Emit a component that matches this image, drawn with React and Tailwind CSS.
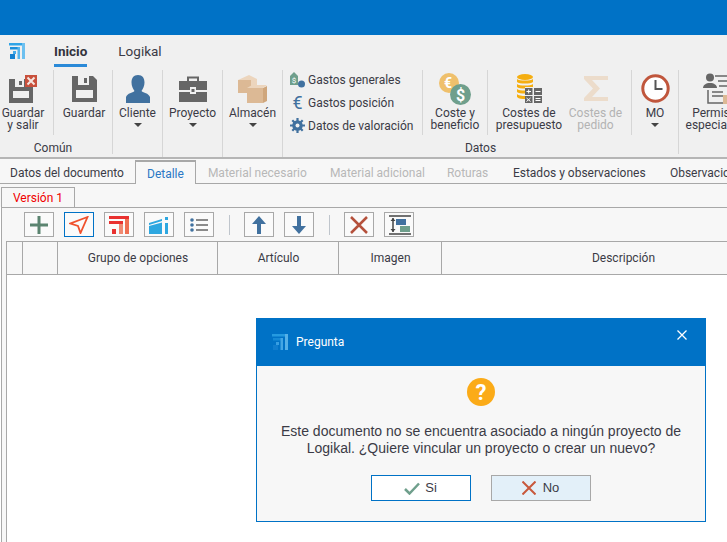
function Logo({ className }) {
  return (
    <svg className={className} viewBox="0 0 16 16">
      <rect x="0" y="0" width="16" height="2.500" fill="#2fa4e7" />
      <rect x="13" y="0" width="3" height="16" fill="#6cc0f0" />
      <rect x="1" y="4" width="10" height="2.500" fill="#1b8fdb" />
      <rect x="8.500" y="4" width="2.500" height="12" fill="#55b4ec" />
      <rect x="1" y="11" width="5" height="5" fill="#1580d0" />
      <rect x="4" y="8" width="3" height="3" fill="#45aaea" />
    </svg>
  );
}

function Floppy() {
  return (
    <svg width="25" height="26" viewBox="0 0 25 26">
      <path d="M0 0h21l4 4v22H0z" fill="#666" />
      <rect x="6" y="0" width="11" height="9" fill="#f0f0f0" />
      <rect x="12" y="2" width="3" height="5" fill="#666" />
      <rect x="4" y="14" width="17" height="8" fill="#f0f0f0" />
    </svg>
  );
}

function FloppyX() {
  return (
    <svg width="28" height="28" viewBox="0 0 28 28">
      <path d="M0 4h24v24H0z" fill="#666" />
      <rect x="6" y="4" width="9" height="8" fill="#f0f0f0" />
      <rect x="10" y="6" width="3" height="4" fill="#666" />
      <rect x="4" y="16" width="16" height="7" fill="#f0f0f0" />
      <rect x="16" y="0" width="12" height="12" fill="#c8503c" />
      <path d="M18.500 2.500l7 7M25.500 2.500l-7 7" stroke="#f5e6e0" strokeWidth="2" />
    </svg>
  );
}

function Person() {
  return (
    <svg width="24" height="28" viewBox="0 0 24 28">
      <path d="M12 0c4.500 0 6.500 3 6.500 7.500 0 3.500-1.500 6.500-3 8.500 2 2 7 2 8.500 6v6H0v-6c1.500-4 6.500-4 8.500-6-1.500-2-3-5-3-8.500C5.500 3 7.500 0 12 0z" fill="#41719f" />
    </svg>
  );
}

function Briefcase() {
  return (
    <svg width="28" height="26" viewBox="0 0 28 26">
      <path d="M9 6V1.500h10V6" fill="none" stroke="#666" strokeWidth="2" />
      <path d="M0 5h28v9H0zM0 16h28v10H0z" fill="#666" />
      <rect x="11" y="11" width="6" height="7" fill="#f0f0f0" />
      <rect x="12.500" y="13" width="3" height="3" fill="#666" />
    </svg>
  );
}

function Boxes() {
  return (
    <svg width="29" height="28" viewBox="0 0 29 28">
      <path d="M0 5l11-5 8 4v9l-8 4-11-4z" fill="#ecd5bd" />
      <path d="M0 5h13v13H0z" fill="#dcb995" />
      <path d="M9 13h16v15H9z" fill="#dcb995" />
      <path d="M25 13l4-2v15l-4 2z" fill="#cfa67c" />
      <path d="M9 13l5-3h15l-4 3z" fill="#ecd5bd" />
    </svg>
  );
}

function Coins() {
  return (
    <svg width="32" height="32" viewBox="0 0 32 32">
      <circle cx="10" cy="10" r="10" fill="#efc06c" />
      <text x="9" y="15" textAnchor="middle" fill="#fff" fontSize="14" fontWeight="700" fontFamily="Roboto, sans-serif">€</text>
      <circle cx="21.500" cy="21.500" r="10.500" fill="#6f9f8c" />
      <text x="21.500" y="27.500" textAnchor="middle" fill="#fff" fontSize="16" fontWeight="700" fontFamily="Roboto, sans-serif">$</text>
    </svg>
  );
}

function Database() {
  return (
    <svg width="25" height="29" viewBox="0 0 25 29">
      <ellipse cx="8" cy="3" rx="8" ry="3" fill="#f5ae10" />
      <path d="M0 5c2 2 14 2 16 0v3c-2 2-14 2-16 0zM0 10c2 2 14 2 16 0v3c-2 2-14 2-16 0zM0 15c2 2 14 2 16 0v3c-2 2-14 2-16 0zM0 20c2 2 8 2 8 2v3c-3 0-6 0-8-2z" fill="#f5ae10" />
      <rect x="8" y="13" width="17" height="16" fill="#f0f0f0" />
      <rect x="8" y="14" width="7.500" height="7" fill="#666" />
      <rect x="17" y="14" width="8" height="7" fill="#666" />
      <rect x="8" y="22" width="7.500" height="7" fill="#666" />
      <rect x="17" y="22" width="8" height="7" fill="#666" />
      <path d="M9.500 17.500h4.500M11.700 15.500v4M18.500 17.500h5M9.500 24l4 3.500M13.500 24l-4 3.500M18.500 24.500h5M18.500 26.500h5" stroke="#fff" strokeWidth="1" />
    </svg>
  );
}

function Sigma() {
  return (
    <svg width="24" height="25" viewBox="0 0 24 25">
      <path d="M0 0h24v4H8l8 8.500L8 21h16v4H0v-3l9-9.500L0 3z" fill="#ecdccb" />
    </svg>
  );
}

function Clock() {
  return (
    <svg width="29" height="29" viewBox="0 0 29 29">
      <circle cx="14.500" cy="14.500" r="12.700" fill="#fff" stroke="#c0563c" strokeWidth="3" />
      <path d="M14.500 6v9h7" fill="none" stroke="#555" strokeWidth="2" />
    </svg>
  );
}

function Permit() {
  return (
    <svg width="30" height="31" viewBox="0 0 30 31">
      <circle cx="7" cy="4.500" r="4" fill="#666" />
      <path d="M0 15c0-3 3-5 7-5s7 2 7 5z" fill="#666" />
      <path d="M5 17v13h18M12 3h16M15 8h13M16 13h12M9 19h11M9 23h11" fill="none" stroke="#666" strokeWidth="1.500" />
      <rect x="20" y="22" width="10" height="9" fill="#dcb995" />
    </svg>
  );
}

function Arrow() {
  return <div className="mt-[4px] h-0 w-0 border-x-[4px] border-t-[4px] border-x-transparent border-t-[#444]" />;
}

function IconBox({ children }) {
  return <div className="flex h-[37px] items-center justify-center">{children}</div>;
}

function Label({ lines, muted }) {
  return (
    <div className={`whitespace-nowrap text-center leading-[12px] ${muted ? "text-[#b3b3b3]" : ""}`}>
      {lines.map((l) => <div key={l}>{l}</div>)}
    </div>
  );
}

function BigGroup({ icon, lines, width }) {
  return (
    <div className={`${width} flex h-full shrink-0 flex-col items-center border-r border-[#d6d6d6]`}>
      <IconBox>{icon}</IconBox>
      <Label lines={lines} />
      <Arrow />
    </div>
  );
}

function ListRow({ icon, label }) {
  return (
    <div className="flex h-[23px] shrink-0 items-center gap-[3px]">
      <div className="flex w-[15px] justify-center">{icon}</div>
      <span className="whitespace-nowrap">{label}</span>
    </div>
  );
}

function ToolBtn({ children, active }) {
  return (
    <div className={`flex h-[25px] w-[30px] shrink-0 items-center justify-center border bg-[#fafafa] ${active ? "border-[#0072c6]" : "border-[#a8a8a8]"}`}>
      {children}
    </div>
  );
}

function Tab({ label, muted, width }) {
  return (
    <div className={`${width} flex h-[24px] shrink-0 items-center whitespace-nowrap pt-[3px] ${muted ? "text-[#b8b8b8]" : ""}`}>
      {label}
    </div>
  );
}

function Th({ width, label }) {
  return (
    <div className={`${width} flex shrink-0 items-center justify-center border-r border-[#a8a8a8] pl-px`}>{label}</div>
  );
}

export default function App() {
  return (
    <div className="relative flex h-[542px] w-[727px] flex-col overflow-hidden bg-white text-[12px] text-[#3b3b46] [font-family:Roboto,sans-serif]">
      <div className="h-[35px] shrink-0 bg-[#0072c6]" />

      {/* menu */}
      <div className="flex h-[32px] shrink-0 items-start bg-[#f0f0f0] pl-[9px] pt-[8px]">
        <Logo className="h-[16px] w-[16px]" />
        <div className="ml-[29px] h-[24px] border-b-[3px] border-[#2b8ad8] text-[13.500px] font-bold leading-[17px] text-[#33333d]">Inicio</div>
        <div className="ml-[31px] text-[13.500px] leading-[17px]">Logikal</div>
      </div>

      {/* ribbon */}
      <div className="flex h-[92px] shrink-0 overflow-hidden border-b-2 border-[#b5b5b5] bg-[#f0f0f0] pt-[3px]">
        <div className="h-[84px] w-[113px] shrink-0 border-r border-[#d6d6d6]">
          <div className="flex h-[65px]">
            <div className="flex w-[54px] shrink-0 flex-col items-center border-r border-[#d6d6d6] pr-[7px]">
              <IconBox><FloppyX /></IconBox>
              <Label lines={["Guardar", "y salir"]} />
            </div>
            <div className="flex w-[58px] shrink-0 flex-col items-center pl-[2px]">
              <IconBox><Floppy /></IconBox>
              <Label lines={["Guardar"]} />
            </div>
          </div>
          <div className="mt-[4px] pr-[6px] text-center">Común</div>
        </div>
        <BigGroup width="w-[50px]" icon={<Person />} lines={["Cliente"]} />
        <BigGroup width="w-[60px]" icon={<Briefcase />} lines={["Proyecto"]} />
        <BigGroup width="w-[60px]" icon={<Boxes />} lines={["Almacén"]} />

        <div className="h-[84px] w-[396px] shrink-0 border-r border-[#d6d6d6]">
          <div className="flex h-[65px]">
            <div className="flex w-[140px] shrink-0 flex-col justify-center border-r border-[#d6d6d6] pl-[7px]">
              <ListRow label="Gastos generales" icon={
                <svg width="15" height="16" viewBox="0 0 15 16">
                  <path d="M0 4l4-4 4 4v9H0z" fill="#6f9f8c" />
                  <text x="4" y="11" textAnchor="middle" fill="#fff" fontSize="8" fontFamily="Roboto, sans-serif">$</text>
                  <circle cx="11.500" cy="12" r="3.500" fill="#41719f" />
                </svg>
              } />
              <ListRow label="Gastos posición" icon={<span className="text-[18px] leading-none text-[#41719f]">€</span>} />
              <ListRow label="Datos de valoración" icon={
                <svg width="15" height="15" viewBox="0 0 15 15">
                  <circle cx="7.500" cy="7.500" r="3.500" fill="none" stroke="#41719f" strokeWidth="3.500" />
                  <path d="M7.500 0v15M0 7.500h15M2.300 2.300l10.400 10.400M12.700 2.300L2.300 12.700" stroke="#41719f" strokeWidth="2.200" />
                  <circle cx="7.500" cy="7.500" r="2" fill="#f0f0f0" />
                </svg>
              } />
            </div>
            <div className="flex w-[65px] shrink-0 flex-col items-center border-r border-[#d6d6d6]">
              <IconBox><Coins /></IconBox>
              <Label lines={["Coste y", "beneficio"]} />
            </div>
            <div className="flex w-[78px] shrink-0 flex-col items-center pl-[4px]">
              <IconBox><Database /></IconBox>
              <Label lines={["Costes de", "presupuesto"]} />
            </div>
            <div className="flex w-[66px] shrink-0 flex-col items-center border-r border-[#d6d6d6] pr-[6px]">
              <IconBox><Sigma /></IconBox>
              <Label muted lines={["Costes de", "pedido"]} />
            </div>
            <div className="flex w-[46px] shrink-0 flex-col items-center">
              <IconBox><Clock /></IconBox>
              <Label lines={["MO"]} />
              <Arrow />
            </div>
          </div>
          <div className="mt-[4px] text-center">Datos</div>
        </div>
        <div className="flex w-[76px] shrink-0 flex-col items-center pl-[1px]">
          <IconBox><Permit /></IconBox>
          <div className="flex flex-col items-center whitespace-nowrap leading-[12px]">
            <div>Permisos</div>
            <div className="-ml-[7px]">especiales</div>
          </div>
        </div>
      </div>

      {/* tabs */}
      <div className="flex h-[25px] shrink-0 items-end border-b border-[#a8a8a8] bg-[#f7f7f7]">
        <div className="flex h-[24px] w-[135px] shrink-0 items-center pl-[10px] pt-[3px]">Datos del documento</div>
        <div className="-mb-px mr-[12px] flex h-[24px] shrink-0 items-center whitespace-nowrap border-x border-t-2 border-[#a8a8a8] bg-[#f7f7f7] px-[11px] pt-[1px] text-[#2b78c5]">Detalle</div>
        <Tab width="w-[122px]" label="Material necesario" muted />
        <Tab width="w-[117px]" label="Material adicional" muted />
        <Tab width="w-[66px]" label="Roturas" muted />
        <Tab width="w-[157px]" label="Estados y observaciones" />
        <Tab width="w-[90px]" label="Observaciones" />
      </div>

      {/* version */}
      <div className="flex h-[23px] shrink-0 items-end bg-[#f7f7f7] pl-px">
        <div className="flex h-[20px] w-[74px] items-center justify-center border border-b-0 border-[#a8a8a8] text-[#f00000]">Versión 1</div>
      </div>

      {/* panel */}
      <div className="ml-px flex min-h-0 flex-1 flex-col border-l border-t border-[#a8a8a8] bg-[#f7f7f7]">
        <div className="flex h-[33px] shrink-0 items-center gap-[10px] pl-[22px]">
          <ToolBtn>
            <svg width="18" height="18" viewBox="0 0 18 18"><path d="M9 0v18M0 9h18" stroke="#5b8470" strokeWidth="3" /></svg>
          </ToolBtn>
          <ToolBtn active>
            <svg width="20" height="18" viewBox="0 0 20 18"><path d="M18.500 1L1.500 7.500l7.500 2.500 2.500 7z" fill="none" stroke="#f0512d" strokeWidth="1.800" /></svg>
          </ToolBtn>
          <ToolBtn>
            <svg width="20" height="18" viewBox="0 0 20 18"><path d="M0 0h20v3H0zM0 5h14v3H0z" fill="#e9312f" /><path d="M16 3h4v15h-4z" fill="#ef6f52" /><path d="M10 8h4v10h-4z" fill="#f08a72" /><path d="M3 13h4v5H3z" fill="#e9312f" /></svg>
          </ToolBtn>
          <ToolBtn>
            <svg width="20" height="18" viewBox="0 0 20 18"><path d="M0 10l13-3.500V18H0z" fill="#2da7e0" /><path d="M0 7l13-4v2L0 9z" fill="#2da7e0" /><rect x="16" y="7" width="3" height="11" fill="#2da7e0" /><rect x="16" y="1" width="3" height="3" fill="#2da7e0" /></svg>
          </ToolBtn>
          <ToolBtn>
            <svg width="18" height="14" viewBox="0 0 18 14"><path d="M6 2h12M6 7h12M6 12h12" stroke="#666" strokeWidth="1.500" /><circle cx="2" cy="2" r="1.800" fill="#41719f" /><circle cx="2" cy="7" r="1.800" fill="#41719f" /><circle cx="2" cy="12" r="1.800" fill="#41719f" /></svg>
          </ToolBtn>
          <div className="mx-[4.500px] h-[20px] w-px bg-[#bfc5cc]" />
          <ToolBtn>
            <svg width="14" height="18" viewBox="0 0 14 18"><path d="M7 0l7 8H9v10H5V8H0z" fill="#41719f" /></svg>
          </ToolBtn>
          <ToolBtn>
            <svg width="14" height="18" viewBox="0 0 14 18"><path d="M7 18l7-8H9V0H5v10H0z" fill="#41719f" /></svg>
          </ToolBtn>
          <div className="mx-[4.500px] h-[20px] w-px bg-[#bfc5cc]" />
          <ToolBtn>
            <svg width="18" height="18" viewBox="0 0 18 18"><path d="M1 1l16 16M17 1L1 17" stroke="#b5513c" strokeWidth="2.500" /></svg>
          </ToolBtn>
          <ToolBtn>
            <svg width="24" height="20" viewBox="0 0 24 20"><path d="M2 1h22M2 19h22" stroke="#444" strokeWidth="1.500" /><path d="M6 3v14" stroke="#444" strokeWidth="1.500" /><path d="M3.500 6L6 3l2.500 3zM3.500 14L6 17l2.500-3z" fill="#444" /><rect x="9" y="4" width="10" height="6" fill="#41719f" /><rect x="13" y="11" width="10" height="6" fill="#6f9f8c" /></svg>
          </ToolBtn>
        </div>

        {/* table */}
        <div className="ml-[4px] min-h-0 flex-1 border-l border-[#a8a8a8] bg-white">
          <div className="flex h-[34px] border-y border-[#a8a8a8] bg-[#f7f7f7]">
            <Th width="w-[16px]" />
            <Th width="w-[35px]" />
            <Th width="w-[160px]" label="Grupo de opciones" />
            <Th width="w-[121px]" label="Artículo" />
            <Th width="w-[103px]" label="Imagen" />
            <div className="flex w-[363px] shrink-0 items-center justify-center">
              <span className="whitespace-nowrap">Descripción</span>
            </div>
          </div>
        </div>
      </div>

      {/* dialog */}
      <div className="absolute left-[256px] top-[318px] h-[204px] w-[450px] border-x border-b border-[#0072c6] bg-[#f7f7f7]">
        <div className="-mx-px flex h-[48px] items-center justify-between bg-[#0072c6] pl-[16px] pr-[19px] text-white">
          <div className="flex items-center gap-[8px]">
            <Logo className="h-[16px] w-[16px] opacity-80" />
            <span>Pregunta</span>
          </div>
          <svg width="10" height="10" viewBox="0 0 10 10" className="-mt-[14px]"><path d="M.5.500l9 9M9.500.500l-9 9" stroke="#fff" strokeWidth="1.300" /></svg>
        </div>
        <div className="flex flex-col items-center">
          <svg width="28" height="28" viewBox="0 0 28 28" className="mt-[12px]">
            <circle cx="14" cy="14" r="14" fill="#fbab18" />
            <text x="14" y="22" textAnchor="middle" fill="#fff" fontSize="22" fontWeight="700" fontFamily="Roboto, sans-serif">?</text>
          </svg>
          <p className="mt-[17px] w-[420px] text-center text-[14px] leading-[17px] [font-family:'Liberation_Sans',sans-serif]">
            Este documento no se encuentra asociado a ningún proyecto de Logikal. ¿Quiere vincular un proyecto o crear un nuevo?
          </p>
          <div className="mt-[18px] flex gap-[20px] pr-px">
            <div className="flex h-[26px] w-[100px] items-center justify-center gap-[5px] border border-[#0072c6] bg-white">
              <svg width="16" height="13" viewBox="0 0 16 13"><path d="M1 7l4.500 4.500L15 1.500" fill="none" stroke="#6f9f8c" strokeWidth="2.500" /></svg>
              <span className="text-[13px] [font-family:'Liberation_Sans',sans-serif]">Si</span>
            </div>
            <div className="flex h-[26px] w-[100px] items-center justify-center gap-[7px] border border-[#a8a8a8] bg-[#e3f0f9]">
              <svg width="14" height="14" viewBox="0 0 14 14"><path d="M.5.500l13 13M13.500.500l-13 13" stroke="#c8583c" strokeWidth="2" /></svg>
              <span className="text-[13px] [font-family:'Liberation_Sans',sans-serif]">No</span>
            </div>
          </div>
        </div>
      </div>
    </div>
  );
}
